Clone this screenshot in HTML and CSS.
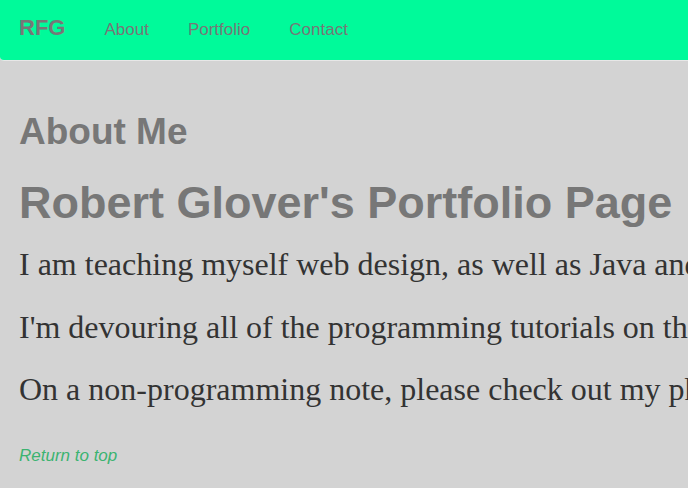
FILE: index.html
```html
<!DOCTYPE html>
<html lang="en">
<head>
<meta charset="utf-8">
<title>Robert Glover's Portfolio Page</title>
<link rel="stylesheet" href="styles.css">
</head>
<body>
<nav class="navbar" id="top">
  <a class="brand" href="#top">RFG</a>
  <a class="nav-link" href="#about">About</a>
  <a class="nav-link" href="#portfolio">Portfolio</a>
  <a class="nav-link" href="#contact">Contact</a>
</nav>
<main class="content" id="about">
  <h2 class="section-title">About Me</h2>
  <h1 class="page-title">Robert Glover's Portfolio Page</h1>
  <p class="para">I am teaching myself web design, as well as Java and Python, in my spare time.</p>
  <p class="para">I'm devouring all of the programming tutorials on the internet that I can find.</p>
  <p class="para">On a non-programming note, please check out my photography as well.</p>
  <a class="top-link" href="#top">Return to top</a>
</main>
</body>
</html>
```
FILE: styles.css
```css
html, body {
  margin: 0;
  padding: 0;
  overflow: hidden;
}
body {
  background: #d3d3d3;
  font-family: "Liberation Sans", Arial, sans-serif;
}
.navbar {
  display: flex;
  align-items: baseline;
  gap: 39px;
  box-sizing: border-box;
  height: 61px;
  padding: 17px 0 0 19px;
  background: #00fa9a;
  border-bottom: 1px solid #e7e7e7;
  border-bottom-left-radius: 4px;
}
.navbar a {
  color: #777;
  text-decoration: none;
  line-height: 1;
}
.brand {
  font-size: 22px;
  font-weight: bold;
}
.nav-link {
  font-size: 17px;
}
.content {
  padding: 0 0 0 19px;
}
.section-title {
  margin: 51px 0 0;
  font-size: 37px;
  line-height: 1.1;
  color: #777;
  font-weight: bold;
}
.page-title {
  margin: 25px 0 0;
  font-size: 45px;
  line-height: 1.1;
  color: #777;
  font-weight: bold;
  white-space: nowrap;
}
.para {
  margin: 18px 0 0;
  font-family: "Liberation Serif", "Times New Roman", serif;
  font-size: 32px;
  line-height: 1.2;
  color: #333;
  white-space: nowrap;
}
.para + .para {
  margin-top: 24px;
}
.top-link {
  display: inline-block;
  margin-top: 38px;
  font-size: 17px;
  line-height: 1.2;
  font-style: italic;
  color: #3cb371;
  text-decoration: none;
}
```
